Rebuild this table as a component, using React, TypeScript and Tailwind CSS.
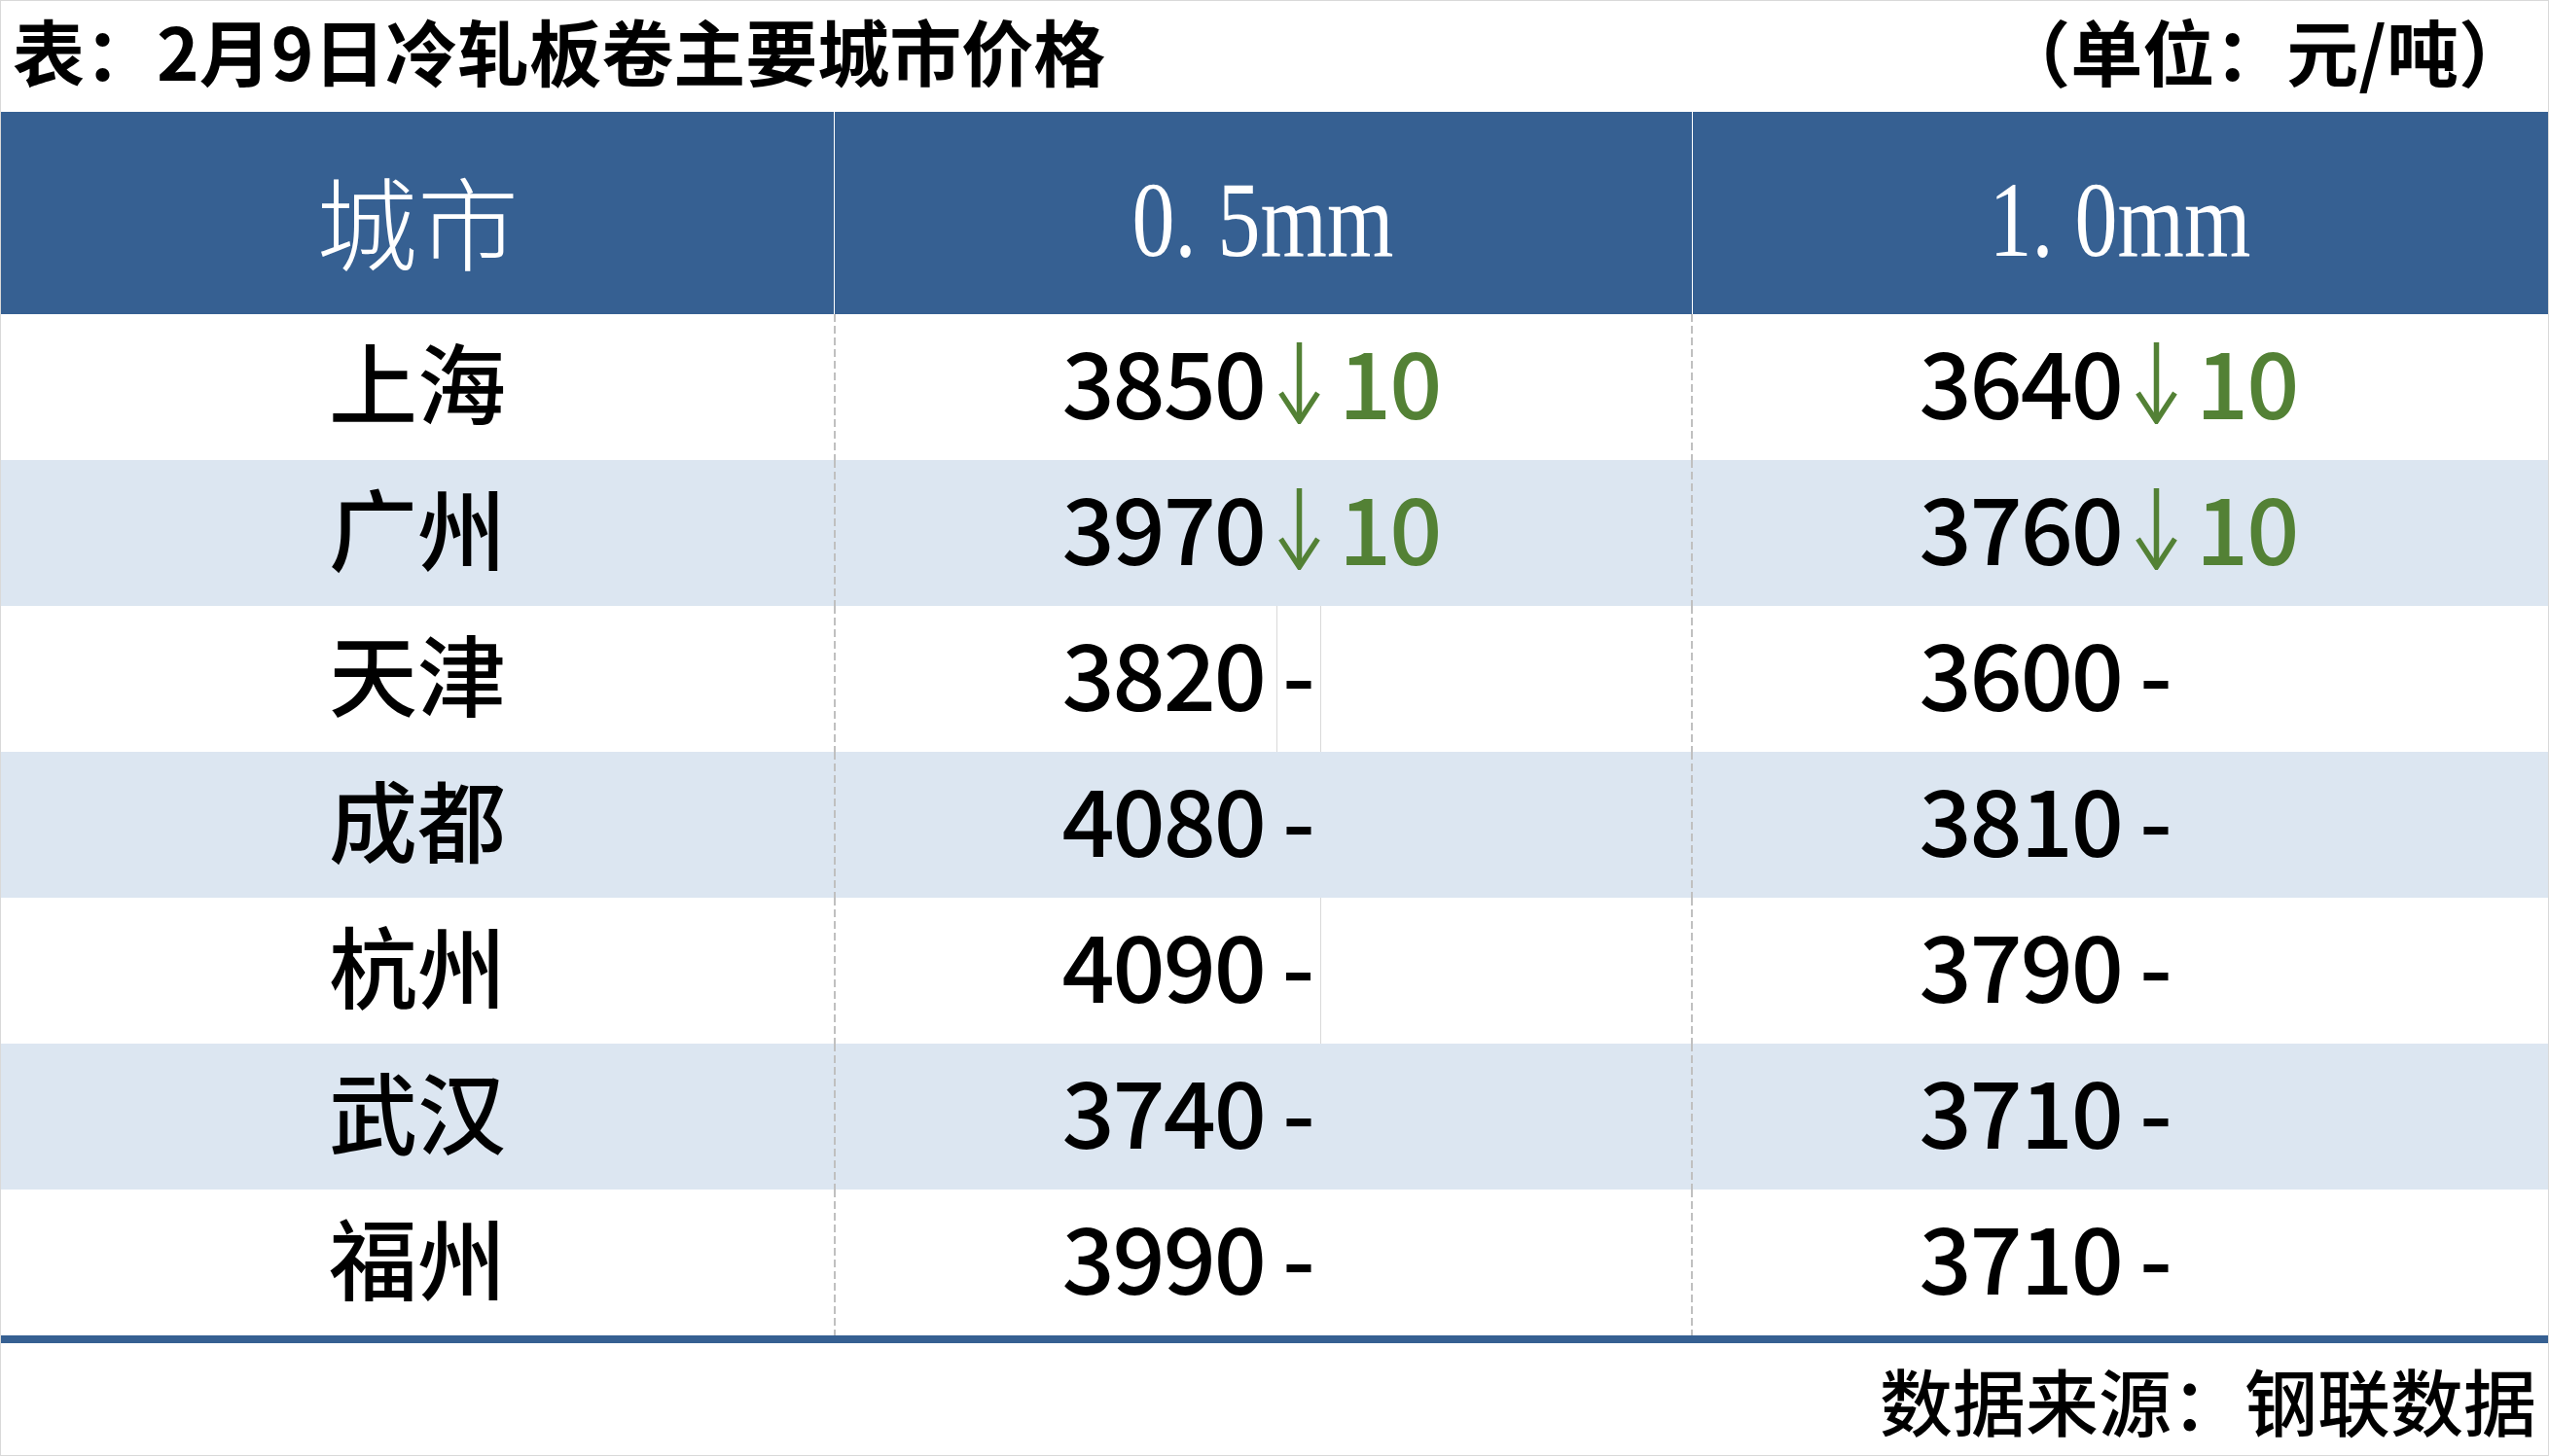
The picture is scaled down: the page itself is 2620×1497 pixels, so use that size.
import React from 'react';

type Row = {
  city: string;
  a: string;
  aChange?: string;
  b: string;
  bChange?: string;
  marks?: 'both' | 'right';
};

const rows: Row[] = [
  { city: '上海', a: '3850', aChange: '10', b: '3640', bChange: '10' },
  { city: '广州', a: '3970', aChange: '10', b: '3760', bChange: '10' },
  { city: '天津', a: '3820', b: '3600', marks: 'both' },
  { city: '成都', a: '4080', b: '3810' },
  { city: '杭州', a: '4090', b: '3790', marks: 'right' },
  { city: '武汉', a: '3740', b: '3710' },
  { city: '福州', a: '3990', b: '3710' },
];

const dashed =
  'w-[2px] self-stretch bg-[image:repeating-linear-gradient(to_bottom,#c0c0c0_0px,#c0c0c0_8px,transparent_8px,transparent_12px)]';

function DownArrow() {
  return (
    <svg width="43" height="84" viewBox="0 0 43 84" fill="none" stroke="#538135" strokeWidth="5.5">
      <path d="M21.5 0 V80" />
      <path d="M2.5 52 L21.5 81 L40.5 52" strokeLinejoin="miter" />
    </svg>
  );
}

function Price({ value, change, marks }: { value: string; change?: string; marks?: Row['marks'] }) {
  const markCls =
    marks === 'both'
      ? 'border-x border-[#d9d9d9]'
      : marks === 'right'
        ? 'border-r border-[#d9d9d9]'
        : '';
  return (
    <div className="flex flex-1 items-stretch">
      <div className={dashed} />
      <div className="flex flex-1 items-stretch">
        <span className="flex w-[453px] items-center justify-end pb-[18px] pr-[12px] tracking-[-2px]">{value}</span>
        <span className={`flex w-[46px] items-center justify-center ${markCls}`}>
          {change ? (
            <span className="mb-[8px] flex">
              <DownArrow />
            </span>
          ) : (
            <span className="pb-[18px]">-</span>
          )}
        </span>
        {change && (
          <span className="flex items-center pb-[18px] pl-[18px] tracking-[-2px] text-[#538135]">{change}</span>
        )}
      </div>
    </div>
  );
}

export default function App() {
  return (
    <div className="flex h-[1497px] w-[2620px] flex-col border border-[#d9d9d9] bg-white font-['Noto_Sans_CJK_SC',sans-serif] text-black">
      <div className="flex h-[114px] items-center justify-between pb-[14px] pl-[12px] pr-[18px] text-[74px] font-bold leading-none">
        <span>表：2月9日冷轧板卷主要城市价格</span>
        <span>（单位：元/吨）</span>
      </div>

      <div className="grid h-[208px] grid-cols-[856px_882px_1fr] bg-[#366092] text-white">
        <div className="flex items-center justify-center pt-[14px] text-[104px] font-light leading-none">
          城市
        </div>
        <div className="flex items-center justify-center border-l border-white pt-[14px]">
          <span className="inline-block scale-x-[0.8] font-['Liberation_Serif',serif] text-[110px] leading-none">
            0. 5mm
          </span>
        </div>
        <div className="flex items-center justify-center border-l border-white pt-[14px]">
          <span className="inline-block scale-x-[0.8] font-['Liberation_Serif',serif] text-[110px] leading-none">
            1. 0mm
          </span>
        </div>
      </div>

      <div className="flex flex-col">
        {rows.map((r, i) => (
          <div
            key={r.city}
            className={`flex h-[150px] text-[95px] font-medium leading-none ${i % 2 === 1 ? 'bg-[#dce6f1]' : 'bg-white'}`}
          >
            <div className="flex w-[856px] items-center justify-center pb-[16px] text-[91px]">{r.city}</div>
            <Price value={r.a} change={r.aChange} marks={r.marks} />
            <Price value={r.b} change={r.bChange} />
          </div>
        ))}
      </div>

      <div className="h-[8px] bg-[#366092]" />

      <div className="flex flex-1 items-center justify-end pr-[12px] text-[75px] font-medium leading-none">
        数据来源：钢联数据
      </div>
    </div>
  );
}
